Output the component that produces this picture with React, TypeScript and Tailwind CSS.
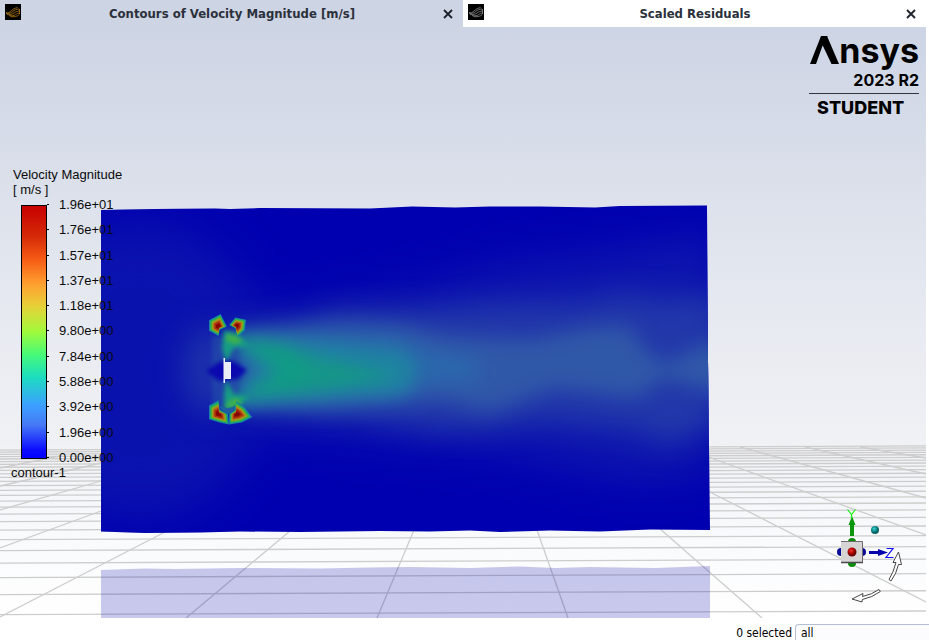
import React from "react";

const LABELS = [
  "1.96e+01",
  "1.76e+01",
  "1.57e+01",
  "1.37e+01",
  "1.18e+01",
  "9.80e+00",
  "7.84e+00",
  "5.88e+00",
  "3.92e+00",
  "1.96e+00",
  "0.00e+00",
];

// Floor lines recede towards the horizon: the gap shrinks with 1 / depth.
const FLOOR_ROWS = Array.from({ length: 26 }, (_, n) => ({
  left: 380 + 1 / (0.004261 + 0.0004 * n),
  right: 376 + 1 / (0.004255 + 0.000402 * n),
}));

const FLOOR_COLUMNS = [
  [0, 468, 60, 456],
  [0, 486, 101, 463],
  [0, 510, 101, 481],
  [0, 548, 101, 511],
  [0, 617, 165, 532],
  [186, 618, 290, 531],
  [377, 618, 414, 530],
  [568, 618, 537, 530],
  [762, 618, 659, 528],
  [926, 602, 708, 491],
  [926, 535, 708, 457],
  [926, 498, 740, 447],
  [926, 474, 805, 447],
  [926, 458, 860, 447],
];

const SHELLS = [
  { scale: 1.05, fill: "#1c7fa6" },
  { scale: 0.96, fill: "#12a08a" },
  { scale: 0.87, fill: "#38b436" },
  { scale: 0.75, fill: "#8ca622" },
  { scale: 0.64, fill: "#b48a1e" },
  { scale: 0.55, fill: "#b45a14" },
  { scale: 0.44, fill: "#a82c0a" },
  { scale: 0.28, fill: "#860606" },
];

const VORTICES: { cx: number; cy: number; points: number[][] }[] = [
  { cx: 218.5, cy: 326.5, points: [[-9, -6], [2, -12], [8, 0], [1, 3], [0, 9], [-9, 4]] },
  { cx: 236.5, cy: 326, points: [[-7, -1], [-1, -8], [9, -6], [8, 4], [1, 11], [-1, 2]] },
  { cx: 218.5, cy: 414, points: [[-9, -8], [0, -13], [1, -4], [9, 0], [10, 10], [1, 8], [-9, 5]] },
  { cx: 236.5, cy: 414, points: [[-7, 0], [-1, -4], [0, -12], [8, -6], [15, 3], [5, 8], [-7, 10]] },
];

const SURFACE =
  "101,210 155,209 215,208.5 230,209 260,208 370,208.5 412,206.5 455,207.5 490,206.5 540,206.5 595,207.5 620,206 707,205.5 708,360 710,530 650,529.5 600,531.5 550,530.5 500,532 470,530.5 430,531.5 380,531 300,532 240,531.5 200,532.5 145,533 101,531.5";

function SolverIcon({ stroke }: { stroke: string }) {
  return (
    <svg viewBox="0 0 16 16" className="h-4 w-4 shrink-0" aria-hidden="true">
      <rect width="16" height="16" fill="#000" />
      <g fill="none" stroke={stroke} strokeWidth="0.8">
        <path d="M1 8.500c2 .6 3 .2 4.500-1C7 6 9.500 4 12.500 3.500" />
        <path d="M1 9.500c3 .4 5-.6 6.500-1.800C9.500 6 11.500 5 14 5" />
        <path d="M2 10.500c3 .6 5.500-.4 7-1.500 2-1.400 3.500-2 6-2" />
        <path d="M4 11.500c3 .6 5 .2 6.500-.8C12 9.500 13 9 15 9" />
        <path d="M5.500 12.500c3 .6 7.500.2 9-2.500V5" />
      </g>
    </svg>
  );
}

function Tab({ title, tone, stroke }: { title: string; tone: string; stroke: string }) {
  return (
    <div className={`flex h-[27px] items-center pr-[7px] pl-[5px] ${tone}`}>
      <div className="-mt-1 flex">
        <SolverIcon stroke={stroke} />
      </div>
      <h2 className="flex-1 pl-[3px] text-center font-['DejaVu_Sans_Condensed','DejaVu_Sans',sans-serif] text-[13px] font-bold text-[#2b303b]">
        {title}
      </h2>
      <button type="button" aria-label={`Close ${title}`} className="flex h-4 w-4 items-center justify-center">
        <svg viewBox="0 0 10 10" className="h-[10px] w-[10px]" aria-hidden="true">
          <path d="M1 1l8 8M9 1l-8 8" stroke="#1c222b" strokeWidth="1.800" />
        </svg>
      </button>
    </div>
  );
}

function Field() {
  return (
    <g clipPath="url(#surface)">
      <rect x="95" y="200" width="620" height="340" fill="#0000b0" />
      <g filter="url(#blur24)">
        <ellipse cx="140" cy="370" rx="130" ry="150" fill="#0a12ae" />
        <path d="M240 320L420 290 500 268 600 256 720 235V470L640 480 500 450 240 425z" fill="#0f19ae" />
      </g>
      <g filter="url(#blur14)">
        <ellipse cx="208" cy="370" rx="26" ry="44" fill="#1c30ab" />
        <path d="M235 328L300 322 335 310 420 310 500 304 575 304 630 294 660 302 720 294V424L665 444 640 430 545 420 485 430 440 430 340 416 240 410z" fill="#2238aa" />
      </g>
      <g filter="url(#blur8)">
        <path d="M238 332L340 324 400 326 450 336 530 340 590 328 628 326 644 348 664 364 725 334V396L665 378 636 398 555 388 490 412 440 400 400 404 330 410 240 406z" fill="#3058a8" />
        <path d="M238 334L320 330 400 334 430 350 478 360 478 380 425 384 405 400 340 404 300 406 240 404z" fill="#2a68ac" />
      </g>
      <g filter="url(#blur6)">
        <path d="M228 334L262 338 330 344 400 350 418 366 408 390 386 394 340 396 260 403 226 410 240 388 262 370 240 352z" fill="#1f82a2" />
        <path d="M234 338L285 344 310 356 364 368 400 376 360 384 330 390 290 394 244 398 228 408 248 390 280 370 248 352z" fill="#159688" />
        <path d="M236 340L285 349 310 372 285 388 240 400 268 385 282 370 262 354z" fill="#109c84" />
      </g>
      <g filter="url(#blur3)">
        <path d="M212 336h26v72h-26z" fill="#2450a8" fillOpacity="0.600" />
        <path d="M206 371l13-9 14-1 14 9-9 9-19 2z" fill="#0a08ae" />
        <path d="M224 330l14 4 12 12-16 2-8 14-4-14z" fill="#179c84" />
        <path d="M224 412l14-4 12-12-16-2-8-14-2 16z" fill="#179c84" />
        <path d="M226 334l12 2 4 6-8 2-8-4zM226 408l12-2 4-6-8-2-8 6z" fill="#3fb04c" />
      </g>
      {VORTICES.map((v) => (
        <g key={`${v.cx}-${v.cy}`} filter="url(#blur1)">
          {SHELLS.map((s) => (
            <polygon
              key={s.scale}
              fill={s.fill}
              points={v.points.map(([x, y]) => `${v.cx + x * s.scale},${v.cy + y * s.scale}`).join(" ")}
            />
          ))}
        </g>
      ))}
      <path d="M220 405q0 8 8 9 7-1 7-9-2 3-7 3t-8-3z" fill="#1d5fa0" />
      <path d="M223.500 358h1.500v4h6v17h-6v4h-1.500z" fill="#eceef5" />
    </g>
  );
}

function Triad() {
  return (
    <g>
      <circle cx="852" cy="542" r="4" fill="#0a8a0a" />
      <circle cx="852" cy="563" r="4" fill="#0a8a0a" />
      <circle cx="841" cy="552" r="4" fill="#0c0c98" />
      <circle cx="862" cy="552" r="4" fill="#0c0c98" />
      <path d="M850 536v-11h-1.500l3.500-9 3.500 9H854v11z" fill="#0b960b" />
      <path d="M869 551v3h9v2l10-3.500-10-3.500v2z" fill="#0505b0" />
      <rect x="841" y="541" width="22" height="22" fill="#d6d4d4" />
      <path d="M841 541.500h21.500V563" fill="none" stroke="#6d6b6b" />
      <path d="M841 562.500h22" stroke="#4b4949" strokeWidth="1.500" />
      <circle cx="852" cy="552" r="4.500" fill="url(#red)" />
      <circle cx="875" cy="530" r="4" fill="url(#teal)" />
      <path d="M847.500 509.500l4 5 4-5M851.500 514.500v4" fill="none" stroke="#10f010" strokeWidth="1.200" />
      <path d="M886.500 548.500h6.500l-7 9h7.500" fill="none" stroke="#1010ff" strokeWidth="1.200" />
      <g fill="#fff" stroke="#333" strokeWidth="0.900">
        <path d="M889 579.500q4.500-7 7-17h-3l5.500-10.500 3 12.500h-3q-2 9-7.500 16.500z" />
        <path d="M879 589.500q-7 5-16.500 7l.5-3L852 599l10 3 .3-2.500q10-2 18-8z" />
      </g>
    </g>
  );
}

function Blur({ id, amount }: { id: string; amount: number }) {
  return (
    <filter id={id} x="-40%" y="-40%" width="180%" height="180%" colorInterpolationFilters="sRGB">
      <feGaussianBlur stdDeviation={amount} />
    </filter>
  );
}

function Viewport() {
  return (
    <svg viewBox="0 27 926 591" preserveAspectRatio="none" className="absolute inset-0 h-full w-full" aria-hidden="true">
      <defs>
        <clipPath id="surface">
          <polygon points={SURFACE} />
        </clipPath>
        <radialGradient id="red" cx="0.4" cy="0.35">
          <stop offset="0" stopColor="#ee3a3a" />
          <stop offset="0.5" stopColor="#c20808" />
          <stop offset="1" stopColor="#6e0606" />
        </radialGradient>
        <radialGradient id="teal" cx="0.4" cy="0.35">
          <stop offset="0" stopColor="#4fd0d0" />
          <stop offset="0.5" stopColor="#109c9c" />
          <stop offset="1" stopColor="#066060" />
        </radialGradient>
        <Blur id="blur24" amount={24} />
        <Blur id="blur14" amount={14} />
        <Blur id="blur8" amount={10} />
        <Blur id="blur6" amount={8} />
        <Blur id="blur3" amount={2} />
        <Blur id="blur1" amount={0.5} />
      </defs>
      <g stroke="#cdcdcd" strokeWidth="1.300">
        {FLOOR_ROWS.map((r) => (
          <line key={r.left} x1="0" y1={r.left} x2="926" y2={r.right} />
        ))}
        {FLOOR_COLUMNS.map(([x1, y1, x2, y2]) => (
          <line key={`${x1}-${y1}`} x1={x1} y1={y1} x2={x2} y2={y2} />
        ))}
      </g>
      <polygon
        points="101,570 145,568.500 175,569 240,568 320,568.500 370,567.500 410,567 470,568 520,566.500 555,568 590,567 655,568 710,566 710,618 101,618"
        fill="#0000a8"
        fillOpacity="0.210"
      />
      <Field />
      <Triad />
    </svg>
  );
}

function Legend() {
  return (
    <section aria-label="Colour map" className="relative pt-[140px] text-[13px] leading-[15px] text-[#0a0a0a]">
      <p className="pl-[13px]">
        Velocity Magnitude
        <br />[ m/s ]
      </p>
      <div className="flex">
        <div className="mt-[8px] ml-[21px] h-[254px] w-[26px] border border-black bg-[linear-gradient(to_bottom,#c80000_0%,#d42a08_12%,#f55a14_21%,#ffa030_31%,#e6d238_40%,#a0fa3c_50%,#46fa78_59%,#1cdcc0_68%,#3ca0ff_79%,#4678f5_87%,#0a0aff_97%,#0000ff_100%)]" />
        <ul className="flex h-[268px] flex-col justify-between">
          {LABELS.map((label) => (
            <li key={label} className="flex items-center">
              <span className="mr-[10px] h-px w-[2px] bg-black" />
              {label}
            </li>
          ))}
        </ul>
      </div>
      <p className="pl-[11px]">contour-1</p>
    </section>
  );
}

function Brand() {
  return (
    <div className="relative mt-[5px] mr-[7px] flex w-[110px] flex-col items-end font-['Inter',sans-serif] text-black">
      <div className="flex h-[38px] items-start">
        <svg viewBox="0 0 30 28" className="mt-1 h-7 w-[30px]" role="img" aria-label="A">
          <path d="M1 28L12 0h5L7 28zM13.500 9L18 0l12 28h-7.500z" />
          <path d="M12.500 0h6l-4 9z" />
        </svg>
        <span className="text-[34px] leading-[38px] font-bold">nsys</span>
      </div>
      <span className="text-base leading-5 font-bold">2023 R2</span>
      <hr className="mt-[3px] w-full border-[#33363d]" />
      <span className="w-full pt-1 pl-2 text-lg leading-5 font-extrabold">STUDENT</span>
    </div>
  );
}

export default function App() {
  return (
    <main className="flex min-h-screen flex-col bg-white font-['Liberation_Sans',Arial,sans-serif]">
      <header className="mr-[3px] grid grid-cols-2">
        <Tab title="Contours of Velocity Magnitude [m/s]" tone="bg-[#cdd4e4]" stroke="#b07a14" />
        <Tab title="Scaled Residuals" tone="bg-white" stroke="#8a8a8a" />
      </header>
      <div className="relative mr-[3px] flex flex-1 items-start justify-between overflow-hidden bg-[linear-gradient(to_bottom,#cdd4e4_0%,#e2e6ee_40%,#f0f1f5_70%,#f9fafc_86%,#ffffff_100%)]">
        <Viewport />
        <Legend />
        <Brand />
      </div>
      <footer className="flex items-stretch justify-end pt-[6px] font-['DejaVu_Sans_Condensed','DejaVu_Sans',sans-serif] text-xs leading-[13px] text-black">
        <label htmlFor="selection" className="pt-[3px] pr-[3px]">
          0 selected
        </label>
        <input
          id="selection"
          defaultValue="all"
          className="w-[134px] rounded-tl-[4px] border-t border-l border-[#b4bed4] bg-[#fcfcfe] px-[5px] pt-[2px] leading-[13px] outline-none"
        />
      </footer>
    </main>
  );
}
